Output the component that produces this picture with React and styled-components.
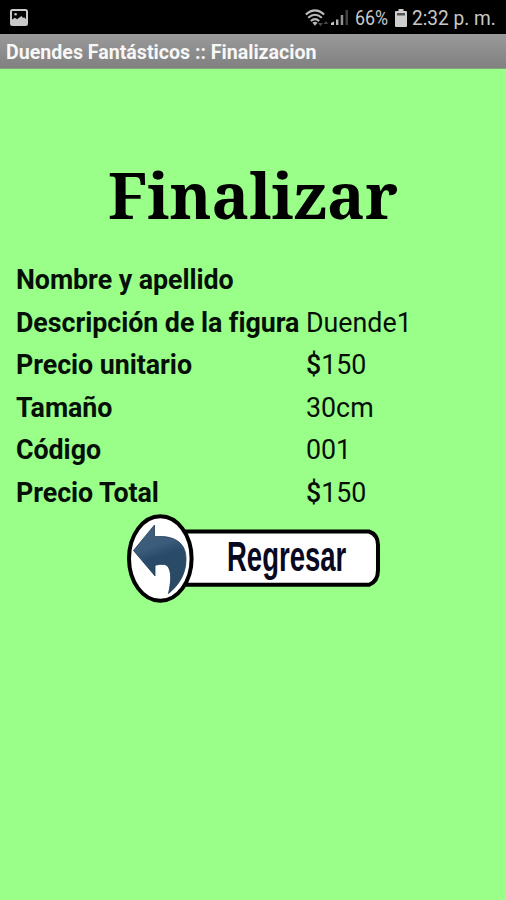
import React from 'react'
import styled, { createGlobalStyle } from 'styled-components'

const GlobalStyle = createGlobalStyle`
  * { box-sizing: border-box; }
  body { margin: 0; background: #99ff88; }
`

const Screen = styled.div`
  width: 506px;
  height: 900px;
  overflow: hidden;
  display: flex;
  flex-direction: column;
  background: #99ff88;
  color: #071007;
  font-family: Roboto, "Liberation Sans", sans-serif;
`

const StatusBar = styled.header`
  flex: none;
  height: 34px;
  padding: 1px 0 0 10px;
  display: flex;
  align-items: center;
  background: #000;
  color: #c8c8c8;
`

const StatusIcon = styled.svg`
  flex: none;
  display: block;
  margin-left: ${props => props.$gap || 0}px;
`

const StatusText = styled.span`
  flex: none;
  width: ${props => props.$width}px;
  margin-left: ${props => props.$gap}px;
  font-size: 20.5px;
  line-height: 34px;
  white-space: nowrap;
  transform: scaleX(${props => props.$squeeze});
  transform-origin: left center;
`

const TitleBar = styled.div`
  flex: none;
  height: 35px;
  padding-left: 6px;
  background: linear-gradient(#9a9a9a, #808080);
  border-bottom: 1px solid #85a57e;
  color: #f7f7f7;
  font-size: 19.6px;
  font-weight: 700;
  line-height: 37px;
  white-space: nowrap;
`

const Content = styled.main`
  flex: 1;
  display: flex;
  flex-direction: column;
`

const Heading = styled.h1`
  margin: 86px 0 0;
  height: 80px;
  color: #000;
  font-family: "Noto Serif", "DejaVu Serif", serif;
  font-size: 63.1px;
  font-weight: 700;
  line-height: 80px;
  text-align: center;
`

const Details = styled.dl`
  margin: 24px 0 0;
  padding-left: 16px;
  display: grid;
  grid-template-columns: 290px 1fr;
  grid-auto-rows: 42.6px;
  font-size: 26.8px;
  line-height: 42.6px;
  white-space: nowrap;
`

const Label = styled.dt`
  font-weight: 700;
  letter-spacing: -0.05px;
`

const Value = styled.dd`
  margin: 0;
`

const Currency = styled.span`
  font-weight: 500;
`

const BackButton = styled.button`
  align-self: flex-start;
  margin: -3px 0 0 126px;
  padding: 0;
  border: 0;
  background: none;
  line-height: 0;
`

const details = [
  { label: 'Nombre y apellido', value: '' },
  { label: 'Descripción de la figura', value: 'Duende1' },
  { label: 'Precio unitario', value: '150', currency: true },
  { label: 'Tamaño', value: '30cm' },
  { label: 'Código', value: '001' },
  { label: 'Precio Total', value: '150', currency: true },
]

function PictureIcon() {
  return (
    <StatusIcon width="18" height="17" viewBox="0 0 18 17">
      <rect x="1" y="1" width="16" height="15" rx="1.5" fill="#050505" stroke="#c9c9c9" strokeWidth="2" />
      <circle cx="5.6" cy="5.3" r="1.3" fill="#c9c9c9" />
      <path d="M2 15V10.5L5 8.8L7 10.3L11.5 7L13 9L14 8.2L16 10V15Z" fill="#c9c9c9" />
    </StatusIcon>
  )
}

function WifiIcon() {
  return (
    <StatusIcon $gap={277} width="24" height="18" viewBox="0 0 24 18">
      <g fill="none" stroke="#bababa" strokeWidth="2">
        <path d="M0.8 5.4Q10 -2.6 19.2 5.4" />
        <path d="M3.2 8.8Q10 2.8 16.8 8.8" />
        <path d="M5.8 11.9Q10 8.3 14.2 11.9" />
      </g>
      <path d="M7.4 13.8Q10 11.6 12.6 13.8L10 16.8Z" fill="#bababa" />
      <path d="M13 14h5l-2.5 3.3zM18.6 15l2.3-3 2.3 3z" fill="#494949" />
    </StatusIcon>
  )
}

function SignalIcon() {
  return (
    <StatusIcon $gap={2} width="18" height="17" viewBox="0 0 18 17">
      <path d="M0 16V14L3 12.5V16Z" fill="#c6c6c6" />
      <path d="M5 10.5h2.4V16H5z" fill="#b5b5b5" />
      <path d="M9.7 6h2.5v10H9.7z" fill="#929292" />
      <path d="M14.5 1H17v15h-2.5z" fill="#414141" />
    </StatusIcon>
  )
}

function BatteryIcon() {
  return (
    <StatusIcon $gap={6} width="12" height="18" viewBox="0 0 12 18">
      <path d="M3.5 0h5v2H11q1 0 1 1v14q0 1-1 1H1q-1 0-1-1V3q0-1 1-1h2.5z" fill="#cecece" />
      <path d="M2 4h8v2.5H2z" fill="#555" />
    </StatusIcon>
  )
}

function BackGraphic() {
  return (
    <svg width="256" height="92" viewBox="126 511 256 92">
      <defs>
        <linearGradient id="arrow" x1="0" y1="0" x2="0.25" y2="1">
          <stop offset="0" stopColor="#42607e" />
          <stop offset="0.38" stopColor="#3b5c7a" />
          <stop offset="0.55" stopColor="#294a68" />
          <stop offset="1" stopColor="#2b4964" />
        </linearGradient>
      </defs>
      <path
        d="M185 530.5H369Q378 533.5 378 544V569Q378 580.5 369 583.8H185Z"
        fill="#fff"
        stroke="#000"
        strokeWidth="4"
      />
      <ellipse cx="160.3" cy="557.5" rx="31.3" ry="42.3" fill="#fff" stroke="#000" strokeWidth="4" />
      <path
        d="M133.5 549.5L154.5 524V535.7C175 534 186 542 186 558C186 573 179 584 168.5 592.5C172 578 171.5 565 164.5 563.5Q160 562.8 155 564.3V575Z"
        fill="url(#arrow)"
        stroke="#203a55"
        strokeWidth="0.8"
      />
      <text
        transform="translate(227 570) scale(0.64 1)"
        fill="#080820"
        fontFamily="'Liberation Sans', Arial, sans-serif"
        fontSize="43"
        fontWeight="700"
      >
        Regresar
      </text>
    </svg>
  )
}

export default function App() {
  return (
    <Screen>
      <GlobalStyle />
      <StatusBar>
        <PictureIcon />
        <WifiIcon />
        <SignalIcon />
        <StatusText $gap={6} $width={34} $squeeze={0.87}>66%</StatusText>
        <BatteryIcon />
        <StatusText $gap={5} $width={86} $squeeze={0.93}>2:32 p. m.</StatusText>
      </StatusBar>
      <TitleBar>Duendes Fantásticos :: Finalizacion</TitleBar>
      <Content>
        <Heading>Finalizar</Heading>
        <Details>
          {
            details.map(({ label, value, currency }) => (
              <React.Fragment key={label}>
                <Label>{label}</Label>
                <Value>
                  {currency && <Currency>$</Currency>}
                  {value}
                </Value>
              </React.Fragment>
            ))
          }
        </Details>
        <BackButton>
          <BackGraphic />
        </BackButton>
      </Content>
    </Screen>
  )
}
